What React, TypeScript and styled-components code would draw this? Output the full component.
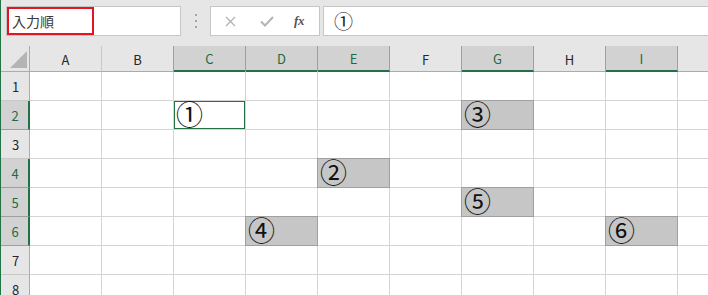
import React from "react";
import styled, { createGlobalStyle } from "styled-components";

const GlobalStyle = createGlobalStyle`
  * { box-sizing: border-box; }
  html, body { margin: 0; padding: 0; background: #ffffff; }
  body { font-family: "Noto Sans CJK JP", "Noto Sans", sans-serif; }
`;

const Window = styled.div`
  width: 708px;
  height: 295px;
  overflow: hidden;
  border-left: 1px solid #217346;
  background: #e6e6e6;
  display: flex;
  flex-direction: column;
`;

const Toolbar = styled.div`
  height: 46px;
  flex: none;
  display: flex;
  align-items: flex-start;
  padding: 6px 0 0 5px;
`;

const NameBox = styled.div`
  width: 175px;
  height: 30px;
  border: 1px solid #c6c6c6;
  background: #ffffff;
  flex: none;
`;

const NameHighlight = styled.div`
  width: 87px;
  height: 28px;
  border: 2px solid #e5141e;
  display: flex;
  align-items: center;
  padding-left: 3px;
  font-size: 14px;
  color: #3a3a3a;
  font-family: "Noto Sans CJK JP", sans-serif;
  line-height: 1;
`;

const Grip = styled.div`
  width: 29px;
  height: 30px;
  flex: none;
  display: flex;
  align-items: center;
  justify-content: center;
`;

const FuncBox = styled.div`
  width: 110px;
  height: 30px;
  flex: none;
  border: 1px solid #c6c6c6;
  background: #ffffff;
  display: flex;
  align-items: center;
  padding-left: 12px;
`;

const FuncButton = styled.div<{ $w: number }>`
  width: ${(p) => p.$w}px;
  height: 28px;
  display: flex;
  align-items: center;
  justify-content: center;
  flex: none;
`;

const FxLabel = styled.span`
  font-family: "Liberation Serif", "DejaVu Serif", serif;
  font-style: italic;
  font-weight: bold;
  font-size: 13px;
  color: #555555;
  letter-spacing: -0.5px;
`;

const FormulaInput = styled.div`
  flex: 1;
  height: 30px;
  margin-left: 3px;
  border: 1px solid #c6c6c6;
  border-right: none;
  background: #ffffff;
  display: flex;
  align-items: center;
  padding-left: 10px;
  font-size: 19px;
  color: #222222;
  line-height: 28px;
`;

const Sheet = styled.div`
  display: grid;
  grid-template-columns: 29px repeat(9, 72px) 40px;
  grid-template-rows: 26px repeat(8, 29px);
  background: #ffffff;
`;

const Corner = styled.div`
  background: #e6e6e6;
  border-right: 1px solid #ababab;
  border-bottom: 1px solid #ababab;
  display: flex;
  align-items: flex-end;
  justify-content: flex-end;
  padding: 0 2px 3px 0;
`;

const ColHeader = styled.div<{ $sel: boolean }>`
  background: ${(p) => (p.$sel ? "#d2d2d2" : "#e6e6e6")};
  border-right: 1px solid ${(p) => (p.$sel ? "#9f9f9f" : "#c8c8c8")};
  border-bottom: ${(p) => (p.$sel ? "2px solid #217346" : "1px solid #ababab")};
  box-shadow: ${(p) => (p.$sel ? "-1px 0 0 #9f9f9f" : "none")};
  color: ${(p) => (p.$sel ? "#1f6a41" : "#262626")};
  font-family: "Noto Sans CJK JP", "Noto Sans", sans-serif;
  font-size: 13px;
  display: flex;
  align-items: center;
  justify-content: center;
  padding-top: 1px;
`;

const RowHeader = styled.div<{ $sel: boolean }>`
  background: ${(p) => (p.$sel ? "#d2d2d2" : "#e6e6e6")};
  border-right: ${(p) => (p.$sel ? "2px solid #217346" : "1px solid #ababab")};
  border-bottom: 1px solid ${(p) => (p.$sel ? "#9f9f9f" : "#c8c8c8")};
  color: ${(p) => (p.$sel ? "#1f6a41" : "#262626")};
  font-family: "Noto Sans CJK JP", "Noto Sans", sans-serif;
  font-size: 13px;
  display: flex;
  align-items: center;
  justify-content: center;
  padding-left: 1px;
`;

type Kind = "none" | "active" | "sel";

const Cell = styled.div<{ $kind: Kind }>`
  background: ${(p) => (p.$kind === "sel" ? "#c6c6c6" : "#ffffff")};
  border-right: 1px solid ${(p) => (p.$kind === "sel" ? "#a0a0a0" : "#d4d4d4")};
  border-bottom: 1px solid ${(p) => (p.$kind === "sel" ? "#a0a0a0" : "#d4d4d4")};
  box-shadow: ${(p) =>
    p.$kind === "sel"
      ? "-1px 0 0 #a0a0a0, 0 -1px 0 #a0a0a0, -1px -1px 0 #a0a0a0"
      : p.$kind === "active"
      ? "inset 0 0 0 1px #217346"
      : "none"};
  display: flex;
  align-items: center;
  padding: 0 0 2px 2px;
  font-family: "Noto Sans CJK JP", sans-serif;
  font-size: 27px;
  line-height: 26px;
  color: #111111;
  white-space: nowrap;
`;

const COLS = ["A", "B", "C", "D", "E", "F", "G", "H", "I"];
const ROWS = [1, 2, 3, 4, 5, 6, 7, 8];
const SEL_COLS = new Set(["C", "D", "E", "G", "I"]);
const SEL_ROWS = new Set([2, 4, 5, 6]);

const DATA: Record<string, { text: string; kind: Kind }> = {
  C2: { text: "①", kind: "active" },
  G2: { text: "③", kind: "sel" },
  E4: { text: "②", kind: "sel" },
  G5: { text: "⑤", kind: "sel" },
  D6: { text: "④", kind: "sel" },
  I6: { text: "⑥", kind: "sel" },
};

const GripIcon = () => (
  <svg width="4" height="14" viewBox="0 0 4 14">
    <rect x="1" y="0" width="2" height="2" fill="#a6a6a6" />
    <rect x="1" y="6" width="2" height="2" fill="#a6a6a6" />
    <rect x="1" y="12" width="2" height="2" fill="#a6a6a6" />
  </svg>
);

const CancelIcon = () => (
  <svg width="11" height="11" viewBox="0 0 11 11">
    <path d="M1 1 L10 10 M10 1 L1 10" stroke="#b4b4b4" strokeWidth="1.4" />
  </svg>
);

const CheckIcon = () => (
  <svg width="14" height="11" viewBox="0 0 14 11">
    <path d="M1 5.5 L5 9.5 L13 1" stroke="#b4b4b4" strokeWidth="2" fill="none" />
  </svg>
);

const CornerTriangle = () => (
  <svg width="17" height="17" viewBox="0 0 17 17">
    <polygon points="17,0 17,17 0,17" fill="#b4b4b4" />
  </svg>
);

export default function App() {
  return (
    <>
      <GlobalStyle />
      <Window>
        <Toolbar>
          <NameBox>
            <NameHighlight>入力順</NameHighlight>
          </NameBox>
          <Grip>
            <GripIcon />
          </Grip>
          <FuncBox>
            <FuncButton $w={14}>
              <CancelIcon />
            </FuncButton>
            <FuncButton $w={60}>
              <CheckIcon />
            </FuncButton>
            <FuncButton $w={4}>
              <FxLabel>fx</FxLabel>
            </FuncButton>
          </FuncBox>
          <FormulaInput>①</FormulaInput>
        </Toolbar>
        <Sheet>
          <Corner>
            <CornerTriangle />
          </Corner>
          {COLS.map((c) => (
            <ColHeader key={c} $sel={SEL_COLS.has(c)}>
              {c}
            </ColHeader>
          ))}
          <ColHeader $sel={false} />
          {ROWS.map((r) => (
            <React.Fragment key={r}>
              <RowHeader $sel={SEL_ROWS.has(r)}>{r}</RowHeader>
              {COLS.map((c) => {
                const d = DATA[`${c}${r}`];
                return (
                  <Cell key={c} $kind={d ? d.kind : "none"}>
                    {d ? d.text : ""}
                  </Cell>
                );
              })}
              <Cell $kind="none" />
            </React.Fragment>
          ))}
        </Sheet>
      </Window>
    </>
  );
}
